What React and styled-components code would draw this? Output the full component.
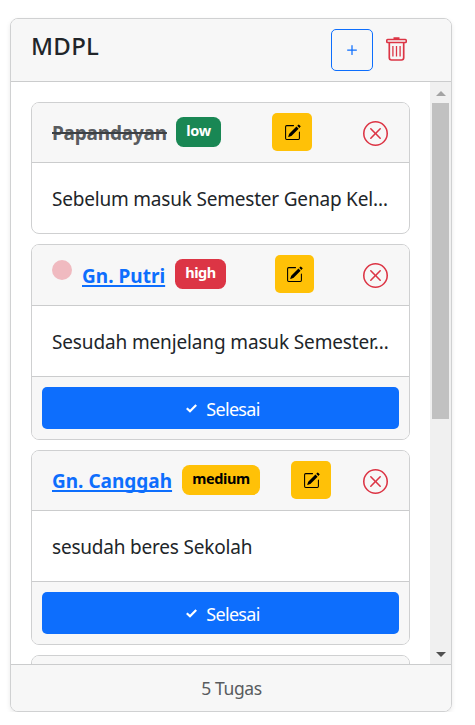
import React from "react";
import styled, { createGlobalStyle } from "styled-components";
import { BsPencilSquare, BsXCircle, BsPlus } from "react-icons/bs";

const GlobalStyle = createGlobalStyle`
  *, *::before, *::after { box-sizing: border-box; }
  body {
    margin: 0;
    background: #fff;
    color: #212529;
    font-family: "Noto Sans", "Open Sans", sans-serif;
    font-size: 19px;
    line-height: 30px;
    overflow: hidden;
  }
  button { font: inherit; padding: 0; cursor: pointer; }
  svg { display: block; flex: none; }
`;

const Board = styled.section`
  display: flex;
  flex-direction: column;
  width: 442px;
  height: 694px;
  margin: 18px 0 0 10px;
  border: 1px solid #d0d1d2;
  border-radius: 8px;
  overflow: hidden;
  background: #fff;
  box-shadow: 0 2px 5px rgba(0, 0, 0, 0.085);
`;

const BoardHeader = styled.header`
  display: flex;
  align-items: flex-start;
  flex: none;
  height: 63px;
  padding: 10px 43px 0 20px;
  background: #f7f7f7;
  border-bottom: 1px solid #cbcccd;
`;

const BoardTitle = styled.h5`
  flex: 1;
  margin: 2px 0 0;
  font-size: 24px;
  line-height: 30px;
  font-weight: 500;
  letter-spacing: 0.3px;
`;

const AddButton = styled.button`
  display: grid;
  place-items: center;
  width: 42px;
  height: 42px;
  margin-right: 13px;
  border: 1px solid #0d6efd;
  border-radius: 5px;
  background: transparent;
  color: #0d6efd;
`;

const IconButton = styled.button`
  display: grid;
  place-items: center;
  border: 0;
  background: none;
  color: #dc3545;
`;

const TrashButton = styled(IconButton)`
  width: 21px;
  height: 25px;
  margin: 8px 1px 0 0;
`;

const BoardBody = styled.div`
  display: flex;
  flex: none;
  height: 582px;
  overflow: hidden;
`;

const TaskList = styled.div`
  display: flex;
  flex-direction: column;
  gap: 10px;
  width: 419px;
  padding: 20px 20px 0;
  margin-right: auto;
`;

const Task = styled.article`
  flex: none;
  width: 379px;
  border: 1px solid #cfd0d1;
  border-radius: 8px;
  overflow: hidden;
  background: #fff;
`;

const TaskHeader = styled.div`
  display: flex;
  align-items: flex-start;
  height: ${(p) => p.$height}px;
  padding: 10px 21px 0 20px;
  background: #f7f7f7;
  border-bottom: 1px solid #cbcccd;
`;

const Dot = styled.span`
  flex: none;
  width: 20px;
  height: 20px;
  margin: 5px 10px 0 0;
  border-radius: 50%;
  background: #f0bac0;
`;

const TaskTitle = styled.a`
  flex: none;
  width: ${(p) => p.$width}px;
  margin-top: ${(p) => (p.$dotted ? 6 : 5)}px;
  white-space: nowrap;
  font-weight: 700;
  letter-spacing: ${(p) => p.$tracking}px;
  color: ${(p) => (p.$done ? "#595c5f" : "#0d6efd")};
  text-decoration: ${(p) => (p.$done ? "line-through #3b3f43 2px" : "underline 2px")};
  text-underline-offset: 2px;
  text-decoration-skip-ink: none;
`;

const badgeColors = {
  low: ["#198754", "#fff"],
  high: ["#dc3545", "#fff"],
  medium: ["#ffc107", "#000"],
};

const Badge = styled.span`
  flex: none;
  width: ${(p) => p.$width}px;
  height: 30px;
  margin: 4px 0 0 10px;
  padding-top: 6px;
  border-radius: 7.5px;
  text-align: center;
  font-size: 14.5px;
  line-height: 15px;
  font-weight: 700;
  letter-spacing: -0.4px;
  background: ${(p) => badgeColors[p.$level][0]};
  color: ${(p) => badgeColors[p.$level][1]};
`;

const EditButton = styled.button`
  display: grid;
  place-items: center;
  width: ${(p) => p.$width}px;
  height: 38px;
  margin-left: ${(p) => p.$gap}px;
  border: 0;
  border-radius: 5px;
  background: #ffc107;
  color: #000;
`;

const CloseButton = styled(IconButton)`
  width: 25px;
  height: 25px;
  margin: 8px 0 0 auto;
`;

const TaskBody = styled.div`
  height: 70px;
  padding: 21px 20px 0;
  white-space: nowrap;
  letter-spacing: ${(p) => p.$tracking}px;
`;

const TaskFooter = styled.div`
  height: 63px;
  padding: 10px;
  background: #f7f7f7;
  border-top: 1px solid #cbcccd;
`;

const DoneButton = styled.button`
  display: flex;
  align-items: center;
  justify-content: center;
  gap: 9px;
  width: 100%;
  height: 42px;
  padding: 2px 0 0 5px;
  border: 0;
  border-radius: 5px;
  background: #0d6efd;
  color: #fff;
  font-size: 18px;
  letter-spacing: -0.7px;

  svg { margin-top: -1px; }
`;

const Scrollbar = styled.div`
  display: flex;
  flex-direction: column;
  align-items: center;
  width: 21px;
  height: 100%;
  background: #f0f0f0;
`;

const ScrollArrow = styled.div`
  display: grid;
  place-items: center;
  flex: none;
  width: 21px;
  height: 21px;
  padding-top: 2px;
  color: ${(p) => (p.$active ? "#505050" : "#a3a3a3")};
`;

const Thumb = styled.div`
  width: 17px;
  height: 316px;
  margin-bottom: auto;
  background: #c1c1c1;
`;

const BoardFooter = styled.footer`
  flex: 1;
  padding: 8px 0 0 1px;
  text-align: center;
  font-size: 17.5px;
  letter-spacing: -0.4px;
  color: #595c5f;
  background: #f7f7f7;
  border-top: 1px solid #cbcccd;
`;

const tasks = [
  { title: "Papandayan", titleWidth: 114, tracking: -0.2, level: "low", badgeWidth: 45,
    gap: 51, editWidth: 40, height: 60, text: "Sebelum masuk Semester Genap Kel…", textTracking: -0.2, done: true },
  { title: "Gn. Putri", titleWidth: 83, tracking: 0.02, level: "high", badgeWidth: 51,
    gap: 49, editWidth: 39, height: 61, text: "Sesudah menjelang masuk Semester…", textTracking: -0.14, dot: true },
  { title: "Gn. Canggah", titleWidth: 120, tracking: 0, level: "medium", badgeWidth: 78,
    gap: 31, editWidth: 40, height: 60, text: "sesudah beres Sekolah", textTracking: -0.2 },
];

function CheckIcon() {
  return (
    <svg width="11" height="9" viewBox="0 0 11 9" fill="none" stroke="currentColor" strokeWidth="2.2">
      <path d="M.8 4.2 4 7.3 10.2 1" />
    </svg>
  );
}

function TrashIcon() {
  return (
    <svg width="21" height="25" viewBox="0 0 21 25" fill="none" stroke="currentColor">
      <path d="M7.5 1.2h6" strokeWidth="2" />
      <rect x=".8" y="2.5" width="19.4" height="3" rx=".8" strokeWidth="1.6" />
      <path d="M3.3 6v14.8a2.2 2.2 0 0 0 2.2 2.2h10a2.2 2.2 0 0 0 2.2-2.2V6" strokeWidth="1.7" />
      <path d="M6.9 9v10.6M10.5 9v10.6M14.1 9v10.6" strokeWidth="1.3" />
    </svg>
  );
}

function TaskCard({ task }) {
  return (
    <Task>
      <TaskHeader $height={task.height}>
        {task.dot && <Dot />}
        <TaskTitle $width={task.titleWidth} $tracking={task.tracking} $done={task.done} $dotted={task.dot}>
          {task.title}
        </TaskTitle>
        <Badge $width={task.badgeWidth} $level={task.level}>{task.level}</Badge>
        <EditButton $width={task.editWidth} $gap={task.gap} aria-label="Edit">
          <BsPencilSquare size={17} />
        </EditButton>
        <CloseButton aria-label="Hapus">
          <BsXCircle size={25} />
        </CloseButton>
      </TaskHeader>
      <TaskBody $tracking={task.textTracking}>{task.text}</TaskBody>
      {!task.done && (
        <TaskFooter>
          <DoneButton><CheckIcon />Selesai</DoneButton>
        </TaskFooter>
      )}
    </Task>
  );
}

export default function App() {
  return (
    <>
      <GlobalStyle />
      <Board>
        <BoardHeader>
          <BoardTitle>MDPL</BoardTitle>
          <AddButton aria-label="Tambah"><BsPlus size={20} /></AddButton>
          <TrashButton aria-label="Hapus"><TrashIcon /></TrashButton>
        </BoardHeader>
        <BoardBody>
          <TaskList>
            {tasks.map((task) => <TaskCard key={task.title} task={task} />)}
            <Task><TaskHeader $height={60} /></Task>
          </TaskList>
          <Scrollbar>
            <ScrollArrow>
              <svg width="10" height="5" viewBox="0 0 10 5" fill="currentColor"><path d="M0 5 5 0l5 5z" /></svg>
            </ScrollArrow>
            <Thumb />
            <ScrollArrow $active>
              <svg width="10" height="5" viewBox="0 0 10 5" fill="currentColor"><path d="M0 0h10L5 5z" /></svg>
            </ScrollArrow>
          </Scrollbar>
        </BoardBody>
        <BoardFooter>5 Tugas</BoardFooter>
      </Board>
    </>
  );
}
